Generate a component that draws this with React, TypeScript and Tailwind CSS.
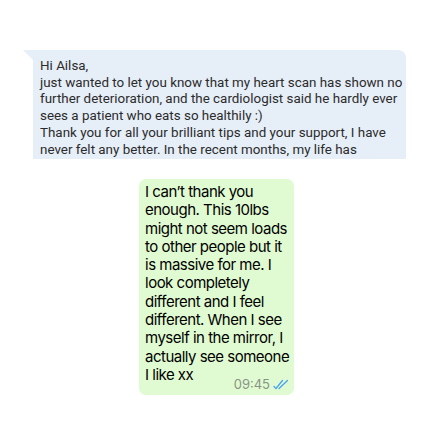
import React from 'react';

const lines = [
  'Hi Ailsa,',
  'just wanted to let you know that my heart scan has shown no',
  'further deterioration, and the cardiologist said he hardly ever',
  'sees a patient who eats so healthily :)',
  'Thank you for all your brilliant tips and your support, I have',
  'never felt any better. In the recent months, my life has',
  'changed a lot and my relationship to food and my body',
];

function DoubleTick() {
  return (
    <svg width="16" height="11" viewBox="0 0 16 11" fill="none" stroke="#4aa3f0" strokeWidth="1.3" strokeLinecap="round">
      <path d="M1 7.5 L3 9.5 L9.5 1.5" />
      <path d="M6 9.5 L14.5 1.5" />
    </svg>
  );
}

export default function App() {
  return (
    <div className="w-[432px] h-[432px] bg-white pt-[50px] overflow-hidden">
      <div className="relative ml-[33px] w-[373px] h-[109px]">
        {/* tail */}
        <div className="absolute left-[-10px] top-0 w-0 h-0 border-t-[10px] border-t-[#e6eef8] border-l-[10px] border-l-transparent" />
        <div className="h-full bg-[#e6eef8] rounded-tr-[8px] overflow-hidden pl-[7px] pt-[8px]">
          <div className="text-[13.4px] leading-[16.7px] text-[#2b2b2b] font-['Roboto',sans-serif]">
            {lines.map((l, i) => (
              <div key={i} className="whitespace-nowrap">{l}</div>
            ))}
          </div>
        </div>
      </div>

      <div className="relative mt-[20px] ml-[139px] w-[155px] bg-[#e0fbd2] rounded-[7px] pl-[6px] pr-[4px] pt-[4px] pb-[11px]">
        <p className="text-[15px] leading-[18.3px] text-black font-['Inter',sans-serif] tracking-[-0.5px]">
          I can’t thank you enough. This 10lbs might not seem loads to other people but it is massive for me. I look completely different and I feel different. When I see myself in the mirror, I actually see someone I like xx
        </p>
        <div className="absolute right-[5px] bottom-[3px] flex items-center gap-[3px]">
          <span className="text-[13px] leading-[16px] text-[#8a9486] font-['Inter',sans-serif]">09:45</span>
          <DoubleTick />
        </div>
      </div>
    </div>
  );
}
